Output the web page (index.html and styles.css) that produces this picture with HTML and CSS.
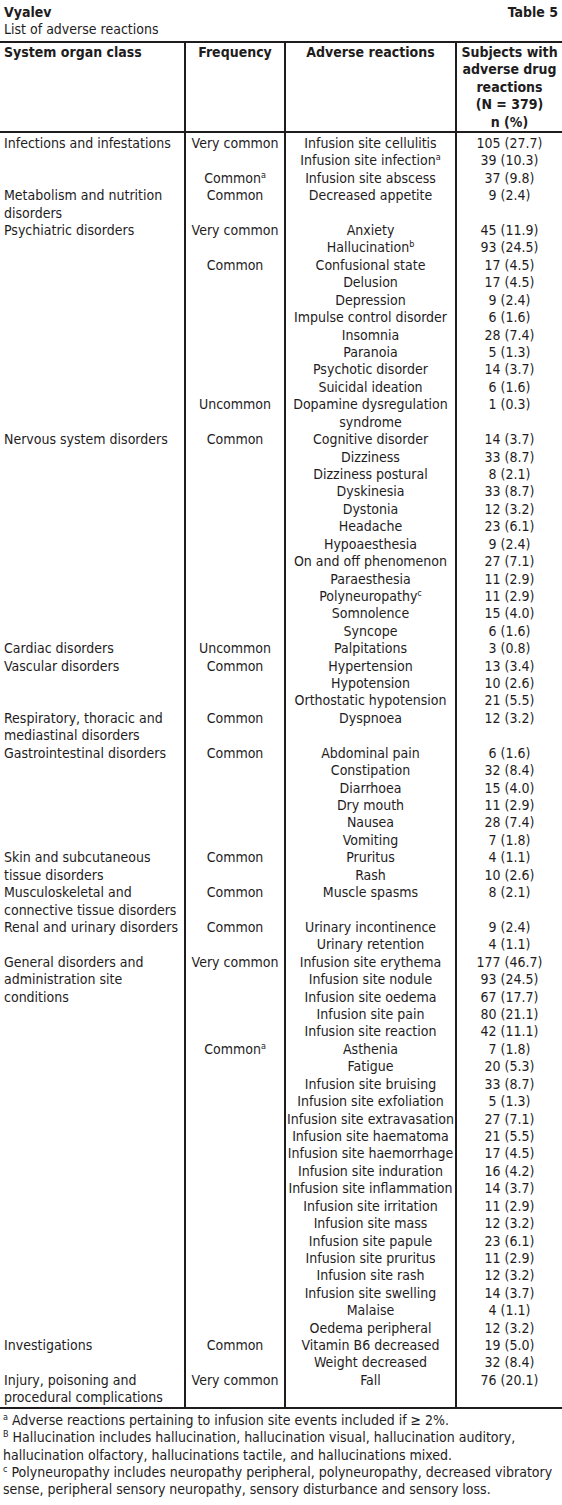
FILE: index.html
```html
<!DOCTYPE html>
<html lang="en">
<head>
<meta charset="utf-8">
<title>Vyalev – Table 5</title>
<link rel="stylesheet" href="styles.css">
</head>
<body>
<div class="page">
  <div class="caption">
    <div class="caption-top"><span class="b">Vyalev</span><span class="b">Table 5</span></div>
    <div>List of adverse reactions</div>
  </div>
  <table class="ar">
    <colgroup><col class="c1"><col class="c2"><col class="c3"><col class="c4"></colgroup>
    <thead>
      <tr><th class="soc">System organ class</th><th>Frequency</th><th>Adverse reactions</th><th>Subjects with<br>adverse drug<br>reactions<br>(N = 379)<br>n (%)</th></tr>
    </thead>
    <tbody>
      <tr class="first"><td class="soc" rowspan="3">Infections and infestations</td><td rowspan="2">Very common</td><td>Infusion site cellulitis</td><td>105 (27.7)</td></tr>
      <tr><td>Infusion site infection<sup>a</sup></td><td>39 (10.3)</td></tr>
      <tr><td>Common<sup>a</sup></td><td>Infusion site abscess</td><td>37 (9.8)</td></tr>

      <tr><td class="soc">Metabolism and nutrition<br>disorders</td><td>Common</td><td>Decreased appetite</td><td>9 (2.4)</td></tr>

      <tr><td class="soc" rowspan="11">Psychiatric disorders</td><td rowspan="2">Very common</td><td>Anxiety</td><td>45 (11.9)</td></tr>
      <tr><td>Hallucination<sup>b</sup></td><td>93 (24.5)</td></tr>
      <tr><td rowspan="8">Common</td><td>Confusional state</td><td>17 (4.5)</td></tr>
      <tr><td>Delusion</td><td>17 (4.5)</td></tr>
      <tr><td>Depression</td><td>9 (2.4)</td></tr>
      <tr><td>Impulse control disorder</td><td>6 (1.6)</td></tr>
      <tr><td>Insomnia</td><td>28 (7.4)</td></tr>
      <tr><td>Paranoia</td><td>5 (1.3)</td></tr>
      <tr><td>Psychotic disorder</td><td>14 (3.7)</td></tr>
      <tr><td>Suicidal ideation</td><td>6 (1.6)</td></tr>
      <tr><td>Uncommon</td><td>Dopamine dysregulation<br>syndrome</td><td>1 (0.3)</td></tr>

      <tr><td class="soc" rowspan="12">Nervous system disorders</td><td rowspan="12">Common</td><td>Cognitive disorder</td><td>14 (3.7)</td></tr>
      <tr><td>Dizziness</td><td>33 (8.7)</td></tr>
      <tr><td>Dizziness postural</td><td>8 (2.1)</td></tr>
      <tr><td>Dyskinesia</td><td>33 (8.7)</td></tr>
      <tr><td>Dystonia</td><td>12 (3.2)</td></tr>
      <tr><td>Headache</td><td>23 (6.1)</td></tr>
      <tr><td>Hypoaesthesia</td><td>9 (2.4)</td></tr>
      <tr><td>On and off phenomenon</td><td>27 (7.1)</td></tr>
      <tr><td>Paraesthesia</td><td>11 (2.9)</td></tr>
      <tr><td>Polyneuropathy<sup>c</sup></td><td>11 (2.9)</td></tr>
      <tr><td>Somnolence</td><td>15 (4.0)</td></tr>
      <tr><td>Syncope</td><td>6 (1.6)</td></tr>

      <tr><td class="soc">Cardiac disorders</td><td>Uncommon</td><td>Palpitations</td><td>3 (0.8)</td></tr>

      <tr><td class="soc" rowspan="3">Vascular disorders</td><td rowspan="3">Common</td><td>Hypertension</td><td>13 (3.4)</td></tr>
      <tr><td>Hypotension</td><td>10 (2.6)</td></tr>
      <tr><td>Orthostatic hypotension</td><td>21 (5.5)</td></tr>

      <tr><td class="soc">Respiratory, thoracic and<br>mediastinal disorders</td><td>Common</td><td>Dyspnoea</td><td>12 (3.2)</td></tr>

      <tr><td class="soc" rowspan="6">Gastrointestinal disorders</td><td rowspan="6">Common</td><td>Abdominal pain</td><td>6 (1.6)</td></tr>
      <tr><td>Constipation</td><td>32 (8.4)</td></tr>
      <tr><td>Diarrhoea</td><td>15 (4.0)</td></tr>
      <tr><td>Dry mouth</td><td>11 (2.9)</td></tr>
      <tr><td>Nausea</td><td>28 (7.4)</td></tr>
      <tr><td>Vomiting</td><td>7 (1.8)</td></tr>

      <tr><td class="soc" rowspan="2">Skin and subcutaneous<br>tissue disorders</td><td rowspan="2">Common</td><td>Pruritus</td><td>4 (1.1)</td></tr>
      <tr><td>Rash</td><td>10 (2.6)</td></tr>

      <tr><td class="soc">Musculoskeletal and<br>connective tissue disorders</td><td>Common</td><td>Muscle spasms</td><td>8 (2.1)</td></tr>

      <tr><td class="soc" rowspan="2">Renal and urinary disorders</td><td rowspan="2">Common</td><td>Urinary incontinence</td><td>9 (2.4)</td></tr>
      <tr><td>Urinary retention</td><td>4 (1.1)</td></tr>

      <tr><td class="soc" rowspan="22">General disorders and<br>administration site<br>conditions</td><td rowspan="5">Very common</td><td>Infusion site erythema</td><td>177 (46.7)</td></tr>
      <tr><td>Infusion site nodule</td><td>93 (24.5)</td></tr>
      <tr><td>Infusion site oedema</td><td>67 (17.7)</td></tr>
      <tr><td>Infusion site pain</td><td>80 (21.1)</td></tr>
      <tr><td>Infusion site reaction</td><td>42 (11.1)</td></tr>
      <tr><td rowspan="17">Common<sup>a</sup></td><td>Asthenia</td><td>7 (1.8)</td></tr>
      <tr><td>Fatigue</td><td>20 (5.3)</td></tr>
      <tr><td>Infusion site bruising</td><td>33 (8.7)</td></tr>
      <tr><td>Infusion site exfoliation</td><td>5 (1.3)</td></tr>
      <tr><td>Infusion site extravasation</td><td>27 (7.1)</td></tr>
      <tr><td>Infusion site haematoma</td><td>21 (5.5)</td></tr>
      <tr><td>Infusion site haemorrhage</td><td>17 (4.5)</td></tr>
      <tr><td>Infusion site induration</td><td>16 (4.2)</td></tr>
      <tr><td>Infusion site inflammation</td><td>14 (3.7)</td></tr>
      <tr><td>Infusion site irritation</td><td>11 (2.9)</td></tr>
      <tr><td>Infusion site mass</td><td>12 (3.2)</td></tr>
      <tr><td>Infusion site papule</td><td>23 (6.1)</td></tr>
      <tr><td>Infusion site pruritus</td><td>11 (2.9)</td></tr>
      <tr><td>Infusion site rash</td><td>12 (3.2)</td></tr>
      <tr><td>Infusion site swelling</td><td>14 (3.7)</td></tr>
      <tr><td>Malaise</td><td>4 (1.1)</td></tr>
      <tr><td>Oedema peripheral</td><td>12 (3.2)</td></tr>

      <tr><td class="soc" rowspan="2">Investigations</td><td rowspan="2">Common</td><td>Vitamin B6 decreased</td><td>19 (5.0)</td></tr>
      <tr><td>Weight decreased</td><td>32 (8.4)</td></tr>

      <tr class="last"><td class="soc">Injury, poisoning and<br>procedural complications</td><td>Very common</td><td>Fall</td><td>76 (20.1)</td></tr>
    </tbody>
  </table>
  <div class="notes">
    <p><sup>a</sup> Adverse reactions pertaining to infusion site events included if ≥ 2%.</p>
    <p><sup>B</sup> Hallucination includes hallucination, hallucination visual, hallucination auditory,<br>hallucination olfactory, hallucinations tactile, and hallucinations mixed.</p>
    <p><sup>c</sup> Polyneuropathy includes neuropathy peripheral, polyneuropathy, decreased vibratory<br>sense, peripheral sensory neuropathy, sensory disturbance and sensory loss.</p>
  </div>
</div>
</body>
</html>
```
FILE: styles.css
```css
html, body {
  margin: 0;
  padding: 0;
  background: #ffffff;
}

.page {
  width: 562px;
  padding-top: 4px;
  color: #1e1c1d;
  font-family: "Liberation Sans Narrow", "Arial Narrow", "DejaVu Sans Condensed", sans-serif;
  font-size: 14px;
  line-height: 17.42px;
}

.b {
  font-weight: bold;
}

.caption {
  padding: 0 4px 0 4px;
  margin-bottom: 2px;
}

.caption-top {
  display: flex;
  justify-content: space-between;
}

.ar {
  width: 562px;
  table-layout: fixed;
  border-collapse: collapse;
  border-top: 2px solid #1e1c1d;
  border-bottom: 2px solid #1e1c1d;
}

.c1 { width: 185px; }
.c2 { width: 100px; }
.c3 { width: 171px; }
.c4 { width: 106px; }

.ar th,
.ar td {
  padding: 0;
  vertical-align: top;
  text-align: center;
  border-left: 2px solid #1e1c1d;
  white-space: nowrap;
}

.ar th:first-child,
.ar td.soc {
  border-left: none;
}

.ar th {
  font-weight: bold;
  padding-top: 1px;
  border-bottom: 2px solid #1e1c1d;
}

.ar .soc {
  text-align: left;
  padding-left: 4px;
}

.ar tr.first td {
  padding-top: 2px;
}

sup {
  font-size: 9px;
  line-height: 0;
  vertical-align: 5px;
}

.notes {
  padding: 3px 3px 0 3px;
}

.notes p {
  margin: 0;
  white-space: nowrap;
}
```
